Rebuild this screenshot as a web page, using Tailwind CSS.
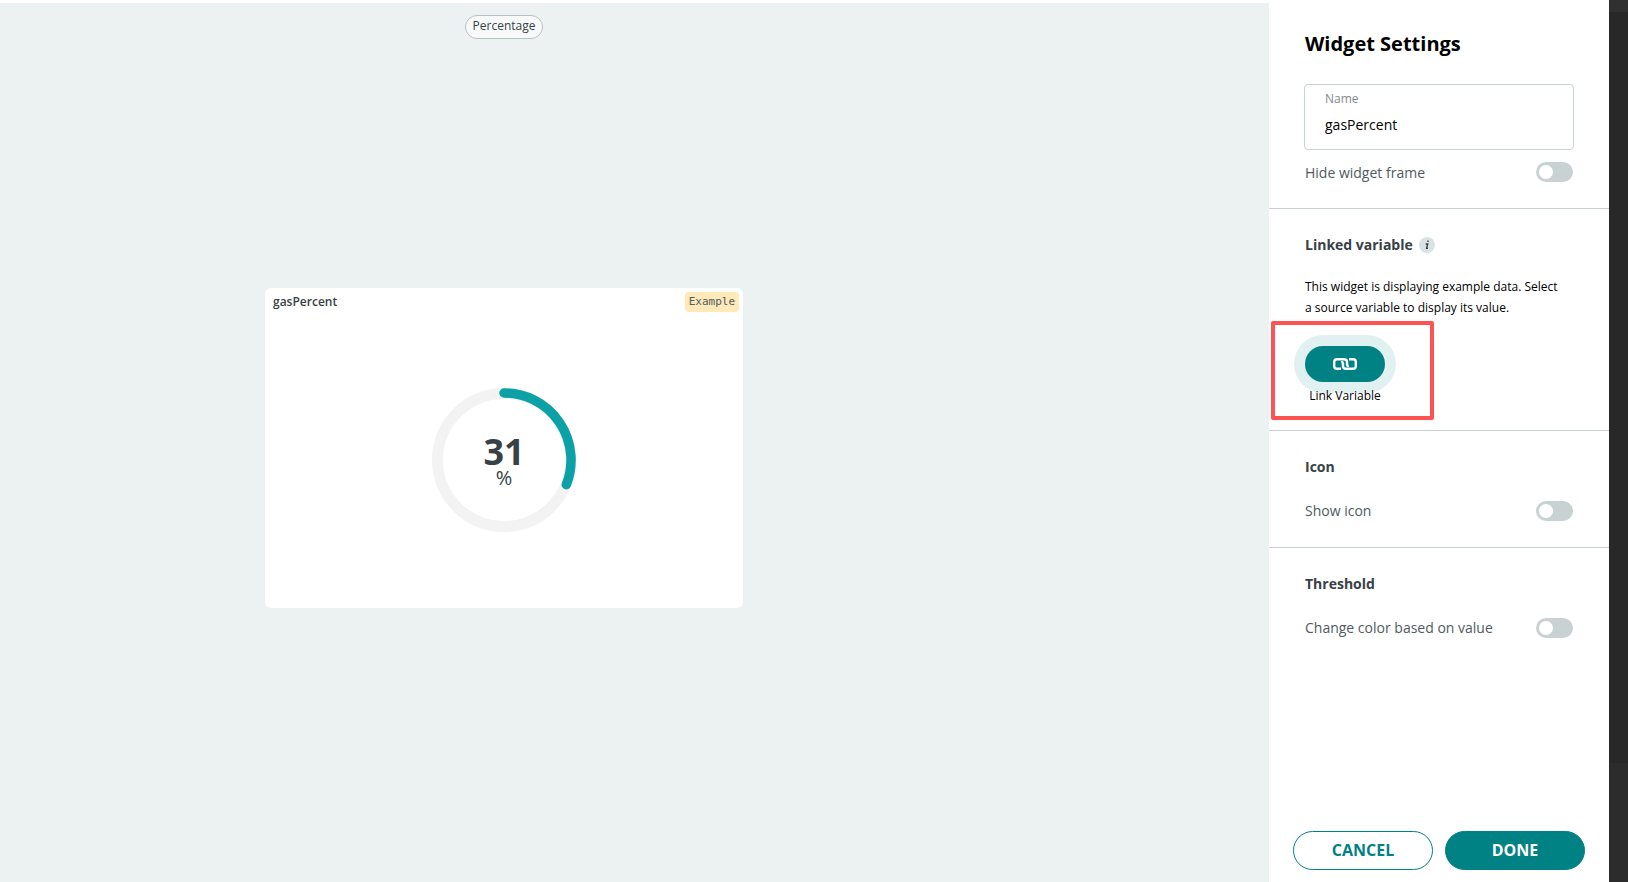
<!DOCTYPE html>
<html lang="en">
<head>
<meta charset="utf-8">
<meta name="viewport" content="width=device-width, initial-scale=1">
<title>Widget Settings</title>
<script src="https://cdn.jsdelivr.net/npm/@tailwindcss/browser@4"></script>
</head>
<body class="flex min-h-screen bg-white font-['Open_Sans',sans-serif] text-[#374146]">
  <main class="mt-[3px] flex flex-1 flex-col items-center bg-[#ecf1f1] pt-3 pr-[261px]">
    <span class="flex h-6 items-center rounded-full border border-[#b5c2c3] bg-[#f8fafa] px-[7px] pb-0.5 text-xs">Percentage</span>
    <div class="flex w-full flex-1 items-center justify-center pb-[25px]">
      <article class="flex h-80 w-[478px] flex-col rounded-md bg-white">
        <header class="flex items-start justify-between pt-1 pr-1 pl-2">
          <h2 class="text-xs leading-5 font-semibold">gasPercent</h2>
          <span class="rounded bg-[#ffe9b9] px-1 font-['DejaVu_Sans_Mono',monospace] text-[11px] leading-5 text-[#4e5b61]">Example</span>
        </header>
        <div class="grid flex-1 place-items-center">
          <svg class="col-start-1 row-start-1 size-36" viewBox="0 0 144 144" fill="none" aria-hidden="true">
            <circle cx="72" cy="72" r="66.5" stroke="#f3f3f3" stroke-width="11"/>
            <path d="M72 5A67 67 0 0 1 134.3 96.7" stroke="#0ca1a6" stroke-width="9.5" stroke-linecap="round"/>
          </svg>
          <p class="col-start-1 row-start-1 flex flex-col items-center">
            <strong class="text-4xl leading-9 font-bold">31</strong>
            <span class="text-xl leading-4">%</span>
          </p>
        </div>
      </article>
    </div>
  </main>

  <aside class="flex w-[340px] flex-col">
    <section class="border-b border-[#c9d2d2] px-9 pt-[30px] pb-6">
      <h1 class="text-xl leading-7 font-bold text-black">Widget Settings</h1>
      <div class="-mx-px mt-[26px] rounded border border-[#c9d2d2] px-5 pt-1.5 pb-3.5">
        <label for="name" class="block text-xs leading-4 text-[#7f8c8d]">Name</label>
        <input id="name" type="text" value="gasPercent" class="mt-2 block h-5 w-full text-sm leading-5 text-black outline-none">
      </div>
      <div class="mt-3 flex items-start justify-between">
        <label for="frame" class="text-sm leading-[22px] text-[#4e5b61]">Hide widget frame</label>
        <input id="frame" type="checkbox" role="switch" class="h-5 w-[37px] appearance-none rounded-full bg-[#c9d2d2] p-[3px] before:block before:size-3.5 before:rounded-full before:bg-white checked:bg-[#008184] checked:before:ml-auto">
      </div>
    </section>

    <section class="border-b border-[#c9d2d2] px-9 pt-[26px] pb-[26px]">
      <div class="flex items-center gap-1.5">
        <h2 class="text-sm leading-5 font-bold">Linked variable</h2>
        <button type="button" aria-label="About linked variables" class="size-4 rounded-full bg-[#dae3e3]">
          <svg viewBox="0 0 16 16" fill="none" stroke="#374146" stroke-width="1.4" aria-hidden="true"><path d="M8.3 4.2H9.7M6.6 7H8.7L7.6 11.2H9"/></svg>
        </button>
      </div>
      <p class="mt-[21px] pr-2 text-xs leading-[21px] text-black">This widget is displaying example data. Select a source variable to display its value.</p>
      <div class="relative mt-7 flex w-20 flex-col items-center">
        <button type="button" aria-labelledby="link-label" class="flex h-9 w-full items-center justify-center rounded-full bg-[#008184] shadow-[0_0_0_11px_#e1f1f2]">
          <svg class="h-3 w-6" viewBox="0 0 24 12" fill="none" stroke="#fff" stroke-width="2.4" aria-hidden="true">
            <path d="M8 10.8H4Q1.2 10.8 1.2 8V4Q1.2 1.2 4 1.2H11Q14 1.2 14 4V6.2Q14 8 15.8 8"/>
            <path d="M16 1.2H20Q22.8 1.2 22.8 4V8Q22.8 10.8 20 10.8H13Q10 10.8 10 8V5.8Q10 4 8.2 4"/>
          </svg>
        </button>
        <span id="link-label" class="relative mt-1.5 text-xs leading-4 whitespace-nowrap text-black">Link Variable</span>
        <span class="pointer-events-none absolute -top-[25px] -left-[34px] h-[99px] w-[163px] rounded-xs border-4 border-[#ff5252]"></span>
      </div>
    </section>

    <section class="border-b border-[#c9d2d2] px-9 py-[26px]">
      <h2 class="text-sm leading-5 font-bold">Icon</h2>
      <div class="mt-6 flex items-start justify-between">
        <label for="icon" class="text-sm leading-5 text-[#4e5b61]">Show icon</label>
        <input id="icon" type="checkbox" role="switch" class="h-5 w-[37px] appearance-none rounded-full bg-[#c9d2d2] p-[3px] before:block before:size-3.5 before:rounded-full before:bg-white checked:bg-[#008184] checked:before:ml-auto">
      </div>
    </section>

    <section class="px-9 py-[26px]">
      <h2 class="text-sm leading-5 font-bold">Threshold</h2>
      <div class="mt-6 flex items-start justify-between">
        <label for="threshold" class="text-sm leading-5 text-[#4e5b61]">Change color based on value</label>
        <input id="threshold" type="checkbox" role="switch" class="h-5 w-[37px] appearance-none rounded-full bg-[#c9d2d2] p-[3px] before:block before:size-3.5 before:rounded-full before:bg-white checked:bg-[#008184] checked:before:ml-auto">
      </div>
    </section>

    <footer class="mt-auto flex gap-3 px-6 pb-3 font-bold">
      <button type="button" class="h-[39px] flex-1 rounded-full border border-[#008184] pb-0.5 text-[#008184]">CANCEL</button>
      <button type="button" class="h-[39px] flex-1 rounded-full border border-[#008184] bg-[#008184] pb-0.5 text-white">DONE</button>
    </footer>
  </aside>

  <div class="flex w-[19px] flex-col bg-[#2b2c2b]">
    <div class="h-3 bg-[#303030]"></div>
    <div class="h-[751px] bg-[#272827]"></div>
  </div>
</body>
</html>
